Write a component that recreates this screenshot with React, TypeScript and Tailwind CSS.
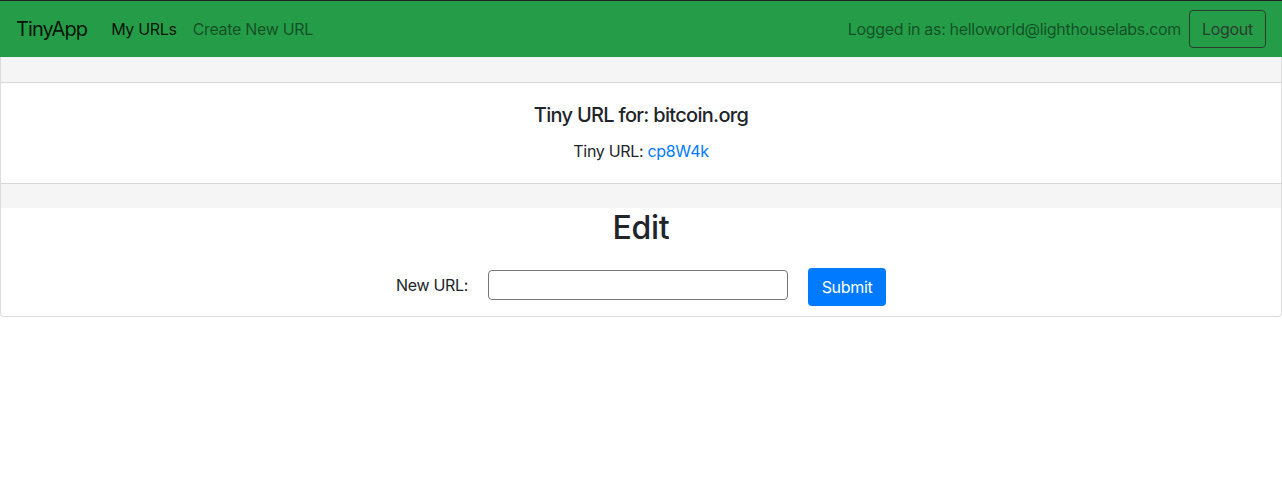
export default function App() {
  return (
    <div className="min-h-[500px] bg-white text-[#212529] tracking-[-0.02em] font-['Inter','Liberation_Sans',sans-serif]">
      {/* Navbar */}
      <nav className="flex h-[57px] items-center border-t border-[#222] bg-[#259d48] px-4">
        <a className="mr-[24px] text-[20px] leading-none tracking-[-0.045em] text-black/90">TinyApp</a>
        <div className="flex items-center gap-4 text-base">
          <a className="text-black/90">My URLs</a>
          <a className="text-black/50">Create New URL</a>
        </div>
        <div className="ml-auto flex items-center gap-2">
          <span className="text-base text-black/50">Logged in as: helloworld@lighthouselabs.com</span>
          <button className="h-[38px] w-[77px] rounded border border-[#2b3b2e] text-base text-[#2b3b2e]">
            Logout
          </button>
        </div>
      </nav>

      {/* Card */}
      <div className="rounded-b border border-t-0 border-[#dcdcdc]">
        <div className="h-[26px] border-b border-[#d6d6d6] bg-[#f5f5f5]" />
        <div className="flex h-[100px] flex-col items-center pt-5 text-center">
          <h5 className="text-[20px] font-medium leading-[24px] tracking-[-0.035em]">Tiny URL for: bitcoin.org</h5>
          <p className="mt-3 text-base leading-6">
            Tiny URL: <a className="text-[#007bff]">cp8W4k</a>
          </p>
        </div>
        <div className="h-[25px] border-t border-[#d6d6d6] bg-[#f5f5f5]" />

        <div className="flex h-[108px] flex-col items-center">
          <h2 className="mt-[1px] text-[32px] font-medium leading-[38px]">Edit</h2>
          <form className="mt-[21px] flex items-start gap-5">
            <label className="mt-[5px] text-base leading-6">New URL:</label>
            <input
              type="text"
              className="mt-[2px] h-[30px] w-[300px] rounded-sm border border-[#767676] bg-white"
            />
            <button
              type="button"
              className="h-[38px] w-[78px] rounded bg-[#007bff] text-base text-white"
            >
              Submit
            </button>
          </form>
        </div>
      </div>
    </div>
  );
}
